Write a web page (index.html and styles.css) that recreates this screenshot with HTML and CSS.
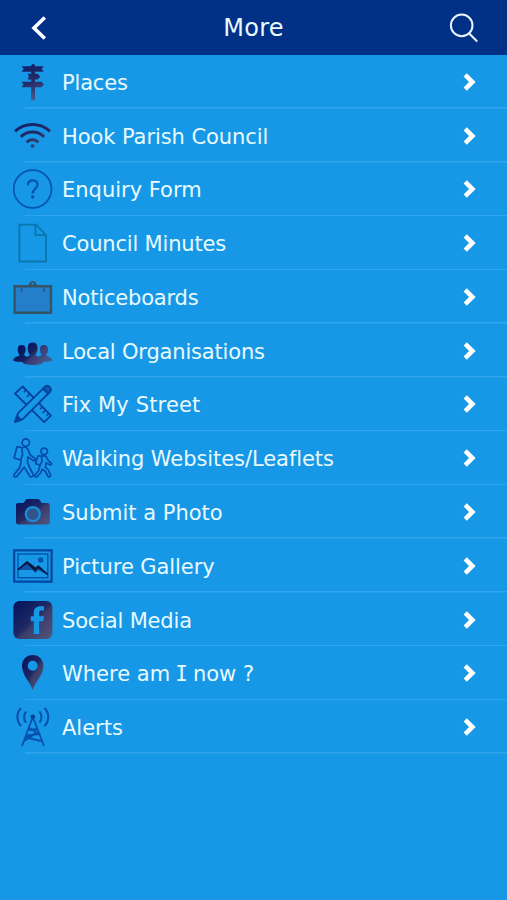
FILE: index.html
```html
<!DOCTYPE html>
<html lang="en">
<head>
<meta charset="utf-8">
<title>More</title>
<link rel="stylesheet" href="styles.css">
</head>
<body>
<svg class="defs" aria-hidden="true">
  <defs>
    <linearGradient id="dusk" x1="0" y1="0" x2="1" y2="1">
      <stop offset="0" stop-color="#00115e"/><stop offset=".48" stop-color="#1e2863"/><stop offset=".58" stop-color="#3b3c6b"/><stop offset="1" stop-color="#51577d"/>
    </linearGradient>
    <linearGradient id="duskDown" gradientUnits="userSpaceOnUse" x1="12" y1="2" x2="24" y2="38">
      <stop offset="0" stop-color="#10206a"/><stop offset=".5" stop-color="#252b66"/><stop offset="1" stop-color="#4d5a86"/>
    </linearGradient>
    <linearGradient id="crowd" gradientUnits="userSpaceOnUse" x1="8" y1="12" x2="30" y2="34">
      <stop offset="0" stop-color="#00115e"/><stop offset=".45" stop-color="#14205f"/><stop offset=".6" stop-color="#3b3c72"/><stop offset="1" stop-color="#435a8f"/>
    </linearGradient>
    <symbol id="chevron" viewBox="0 0 14 20"><path d="M3.2 2.8 10.4 10 3.2 17.2" fill="none" stroke="#fff" stroke-width="4.6"/></symbol>
  </defs>
</svg>
<header class="bar">
  <svg class="back" viewBox="0 0 20 28"><path d="M15.8 3.5 5 14 15.8 24.5" fill="none" stroke="#fff" stroke-width="3.6"/></svg>
  <h1 class="title">More</h1>
  <svg class="search" viewBox="0 0 30 30"><circle cx="12.7" cy="12.4" r="10.8"/><path d="M20.2 20.5 28.2 28.5"/></svg>
</header>
<main class="menu">
  <a class="row">
    <svg class="icon" viewBox="0 0 40 40"><g fill="url(#duskDown)"><path d="M18.2 3.2 20 1.5 22 3.2V38.3H18.2Z"/><path d="M8.5 4.3H30.7L28.7 7 30.7 9.8H8.5L10.8 7Z"/><path d="M16 11.8H24.7L27.3 14.6 24.7 17.4H14.5L16 14.6 14.5 11.8Z"/><path d="M8.5 19.8H28.5L31 22.5 28.5 25.2H8.5L10.5 22.5Z"/></g></svg>
    <span class="label tight">Places</span><svg class="go"><use href="#chevron"/></svg>
  </a>
  <a class="row">
    <svg class="icon" viewBox="0 0 40 40"><g fill="none" stroke="url(#duskDown)" stroke-width="3"><path d="M2 15.3C12 6.2 27 6.2 37 15.3"/><path d="M7.8 20.8C14.5 14.4 24.5 14.4 31.2 20.8"/><path d="M13.5 26.4C17 22.8 22 22.8 25.5 26.4"/></g><circle cx="19.5" cy="30" r="2" fill="#2d4a80"/></svg>
    <span class="label snug">Hook Parish Council</span><svg class="go"><use href="#chevron"/></svg>
  </a>
  <a class="row">
    <svg class="icon" viewBox="0 0 40 40"><g fill="none" stroke="#0553b5"><circle cx="19.6" cy="20" r="18.9" stroke-width="1.7"/><path d="M14.9 16.2C14.9 13 17 11.4 19.8 11.4S24.5 13.2 24.5 16C24.5 19.3 19.7 19.9 19.7 24.5" stroke-width="2.3"/></g><circle cx="19.7" cy="28" r="1.7" fill="#0553b5"/></svg>
    <span class="label">Enquiry Form</span><svg class="go"><use href="#chevron"/></svg>
  </a>
  <a class="row">
    <svg class="icon" viewBox="0 0 40 40"><path d="M6.4 1.7H23L33 12V38.5H6.4ZM22.4 1.7V12.2H33" fill="none" stroke="#0976ac" stroke-width="1.8"/></svg>
    <span class="label tight">Council Minutes</span><svg class="go"><use href="#chevron"/></svg>
  </a>
  <a class="row">
    <svg class="icon" viewBox="0 0 40 40"><path d="M1.6 9.3H38V35.7H1.6Z" fill="#247fca" stroke="#365463" stroke-width="2.4"/><path d="M13 9.3C15 9 16 7.5 16.4 6.2 17.2 3.2 22.2 3.2 23 6.2 23.4 7.5 24.5 9 26.5 9.3Z" fill="#365463"/><circle cx="19.7" cy="6.7" r="1.1" fill="#1698e7"/><path d="M8.5 10V15M31 10V15" stroke="#265f94" stroke-width="2"/><path d="M7 18H33M7 28H33" stroke="#2b78c1" stroke-width=".7"/></svg>
    <span class="label tight">Noticeboards</span><svg class="go"><use href="#chevron"/></svg>
  </a>
  <a class="row">
    <svg class="icon" viewBox="0 0 40 40"><g fill="url(#crowd)"><path d="M.3 29.8C.3 26.3 3 26.1 6.7 24.2 5.2 22.5 4.7 20.5 4.7 18.3 4.7 15.5 6 14 8.7 14S12.6 15.5 12.6 18.3C12.6 20.7 12 22.5 10.8 24.1 13 25 14 25.5 14 31.2 8 31.4 4 31 .3 29.8Z"/><path d="M39.2 29.8C39.2 26.3 36.7 26.1 33 24.2 34.4 22.5 35 20.5 35 18.3 35 15.5 33.7 14 31 14S27.1 15.5 27.1 18.3C27.1 20.7 27.6 22.5 28.8 24.1 26.8 25 25 25.5 25 31.2 31 31.4 36 31 39.2 29.8Z"/><path d="M9.8 32C9.8 26.7 12 26.6 17 24.2 15.3 22 14.7 19.5 14.7 17 14.7 13.4 16.5 11.6 19.6 11.6S24.5 13.4 24.5 17C24.5 19.6 24 22 22.3 24.2 27.5 26.6 30 26.7 30 32 25 34.8 14.5 34.8 9.8 32Z"/></g></svg>
    <span class="label tight">Local Organisations</span><svg class="go"><use href="#chevron"/></svg>
  </a>
  <a class="row">
    <svg class="icon" viewBox="0 0 40 40"><g stroke="#04439d" stroke-width="1.8" stroke-linejoin="round" fill="#1698e7"><path d="M9.7 2.5 38 31.7 31.2 38.2 2 9.5Z"/><path d="M13 5.8 10.7 8.2M17 9.8 13.8 13M21.2 14.2 19 16.4M29.5 22.8 27.2 25.1M32.7 26 29.5 29.2M36 29.4 33.8 31.6" stroke-width="1.5"/><path d="M2.1 38 5 29.2 31.6 3.2C35-.2 39.5 4.6 36.7 8L9.8 35.1Z"/><path d="M2.1 38 4 31.8 8.3 36Z" fill="#04439d"/><path d="M30 4.8 32.3 2.6C35-.2 39.5 4.6 36.7 8L35.1 9.7Z" fill="#0c5bb6"/></g></svg>
    <span class="label loose">Fix My Street</span><svg class="go"><use href="#chevron"/></svg>
  </a>
  <a class="row">
    <svg class="icon" viewBox="0 0 40 40"><g fill="none" stroke="#054ba9" stroke-width="1.7" stroke-linejoin="round" stroke-linecap="round"><circle cx="12.8" cy="4.6" r="3.7"/><path d="M9.2 10.2C11 8.6 14.2 9.1 15 11.4L17 16.8 22 20.4C23 22.2 21.8 23 20.4 22.4L14.8 19 14.5 24 16.4 29 20.2 36.5C20.6 39 17.7 39.7 16.6 37.8L11.2 29.2 9.2 31.8 3.8 38.5C2.3 39.6.2 38.6 1 36.7L6.8 29.4 8.2 22.8"/><path d="M8.8 9.5 4 8.7 1.1 20 7.7 22 9.6 16.6Z"/><circle cx="31.2" cy="13.4" r="3.3"/><path d="M28.8 18.5C30.4 17 33.3 17.7 34 20.2L35.6 23 38 24.8C39.5 26 38.1 27.4 36.8 26.7L33.1 24.9 32.4 29.2 35.3 32 37.6 37.2C37.5 39.5 35.5 39.5 34.8 38L32.5 33.5 29.3 31.2 27.5 35 23.8 39C22 39.3 21.3 37.8 22.3 36.7L25.6 32.8 27.2 26.5"/><path d="M28.4 18 25 17.8 22.6 25.6 27 27.2 29.2 23Z"/></g></svg>
    <span class="label snug">Walking Websites/Leaflets</span><svg class="go"><use href="#chevron"/></svg>
  </a>
  <a class="row">
    <svg class="icon" viewBox="0 0 40 40"><path d="M5 11H10.2C11.6 11 12 7.2 14.3 7H25C27.3 7.2 28 11 29.3 11H34.5Q36.8 11 36.8 13.3V30.5Q36.8 32.6 34.5 32.6H5.2Q3 32.6 3 30.5V13.3Q3 11 5 11Z" fill="url(#dusk)"/><circle cx="19.8" cy="22.1" r="7" fill="#31558b" stroke="#198bd5" stroke-width="2.4"/></svg>
    <span class="label">Submit a Photo</span><svg class="go"><use href="#chevron"/></svg>
  </a>
  <a class="row">
    <svg class="icon" viewBox="0 0 40 40"><path d="M1.2 4.4H38.6V35.6H1.2Z" fill="none" stroke="#05469f" stroke-width="2.2"/><path d="M5 8H34.8V31.8H5Z" fill="none" stroke="#0756ac" stroke-width="1.5"/><path d="M5.2 23.5 14 15.8 22.7 23.2 25.5 20.6 34 28.8 25.3 24 22 27 20 24 5.2 24Z" fill="#0e54a7"/><path d="M4.7 23.3 14 15.3 22.6 21.7 25.4 19.6 34.8 28 34 28.6 25.4 22 22 25.2 14 17.3 5.2 24Z" fill="#08133a" stroke="#08133a" stroke-width=".6"/><circle cx="27.7" cy="14" r="2.7" fill="#0752ab"/></svg>
    <span class="label snug">Picture Gallery</span><svg class="go"><use href="#chevron"/></svg>
  </a>
  <a class="row">
    <svg class="icon" viewBox="0 0 40 40"><rect x=".4" y="1" width="39" height="38" rx="6" fill="url(#dusk)"/><path d="M31 6.3V10.5H28.2C26.6 10.5 26.2 11.5 26.2 13V16.2H31L30.4 21.2H26.2V34H20.8V21.2H17.8V16.2H20.8V12.5C20.8 7.8 23.5 5.5 31 6.3Z" fill="#1698e7"/></svg>
    <span class="label tight">Social Media</span><svg class="go"><use href="#chevron"/></svg>
  </a>
  <a class="row">
    <svg class="icon" viewBox="0 0 40 40"><path d="M19.7 37C17.5 29.5 9 22.5 9 12.8 9 6.5 13.7 2 19.7 2S30.4 6.5 30.4 12.8C30.4 22.5 21.8 29.5 19.7 37ZM19.7 7.7A5 5 0 1 0 19.7 17.7 5 5 0 1 0 19.7 7.7Z" fill="url(#dusk)" fill-rule="evenodd"/></svg>
    <span class="label">Where am <span class="serif-i">I</span> now ?</span><svg class="go"><use href="#chevron"/></svg>
  </a>
  <a class="row">
    <svg class="icon" viewBox="0 0 40 40"><g fill="none" stroke="#0750ac" stroke-width="1.8"><path d="M19.8 10 9 39M19.8 10 31 39M16.3 21 24 25.6 13 30.5 28 34M16 22.8 24.5 22M13.5 28.5 26 27.2M24 25.6 10.8 34.2"/><path d="M13.2 4.6C10.4 7.2 10.4 13 13.2 15.5M8.1.9C3.2 5.5 3.2 14.5 8.1 19M26.4 4.6C29.2 7.2 29.2 13 26.4 15.5M31.5.9C36.4 5.5 36.4 14.5 31.5 19" stroke-width="2.1"/></g><circle cx="19.8" cy="9.8" r="2.3" fill="#07408f"/></svg>
    <span class="label">Alerts</span><svg class="go"><use href="#chevron"/></svg>
  </a>
</main>
</body>
</html>
```
FILE: styles.css
```css
* { box-sizing: border-box; }
body {
  margin: 0;
  min-height: 100vh;
  background: #1698e7;
  color: #e9faff;
  font-family: "DejaVu Sans", Verdana, sans-serif;
}
.defs { display: block; width: 0; height: 0; }
.bar {
  display: grid;
  grid-template-columns: 60px 1fr 60px;
  align-items: center;
  height: 55px;
  background: #003187;
}
.back { width: 20px; height: 28px; margin-left: 28.5px; }
.title {
  margin: 0;
  font-size: 24px;
  line-height: 54px;
  font-weight: 400;
  letter-spacing: 0.2px;
  text-align: center;
}
.search {
  width: 30px;
  height: 30px;
  margin-left: 2px;
  fill: none;
  stroke: #e9f3ff;
  stroke-width: 2;
}
.row {
  display: flex;
  align-items: center;
  height: 53.77px;
  padding: 0 31px 0 13px;
  background: linear-gradient(#30a5ee, #30a5ee) 25px 100% / 100% 1.5px no-repeat;
}
.icon { flex: none; width: 40px; height: 40px; }
.label {
  flex: 1;
  margin-left: 9px;
  padding-top: 2px;
  font-size: 21px;
  line-height: 30px;
  white-space: nowrap;
}
.tight { letter-spacing: -0.18px; }
.snug { letter-spacing: -0.07px; }
.loose { letter-spacing: 0.15px; }
.serif-i {
  margin: 0 -1.6px;
  font-family: "DejaVu Sans Mono", monospace;
}
.go { flex: none; width: 14px; height: 20px; }
```
